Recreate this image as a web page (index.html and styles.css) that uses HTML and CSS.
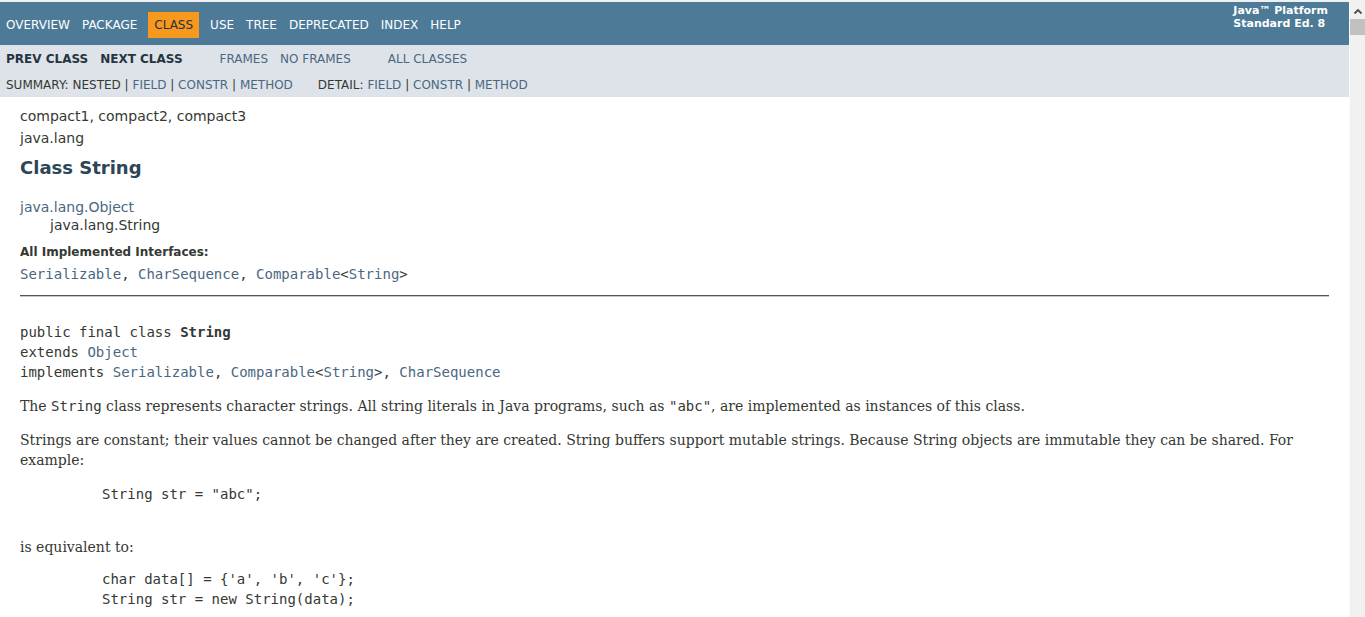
FILE: index.html
```html
<!DOCTYPE html>
<html lang="en">
<head>
<meta charset="utf-8">
<title>String (Java Platform SE 8)</title>
<link rel="stylesheet" href="styles.css">
</head>
<body>
<div class="page">
  <div class="main">
    <div class="topNav">
      <ul class="navList">
        <li><a href="#">Overview</a></li>
        <li><a href="#">Package</a></li>
        <li class="navBarCell1Rev">Class</li>
        <li><a href="#">Use</a></li>
        <li><a href="#">Tree</a></li>
        <li><a href="#">Deprecated</a></li>
        <li><a href="#">Index</a></li>
        <li><a href="#">Help</a></li>
      </ul>
      <div class="aboutLanguage"><strong>Java™ Platform<br>Standard Ed. 8</strong></div>
    </div>
    <div class="subNav">
      <div class="subRow1">
        <ul class="navList">
          <li class="strong">Prev Class</li>
          <li class="strong">Next Class</li>
        </ul>
        <ul class="navList">
          <li><a href="#">Frames</a></li>
          <li><a href="#">No Frames</a></li>
        </ul>
        <ul class="navList">
          <li><a href="#">All Classes</a></li>
        </ul>
      </div>
      <div class="subRow2">
        <ul class="subNavList">
          <li>Summary:&nbsp;Nested&nbsp;|&nbsp;<a href="#">Field</a>&nbsp;|&nbsp;<a href="#">Constr</a>&nbsp;|&nbsp;<a href="#">Method</a></li>
        </ul>
        <ul class="subNavList">
          <li>Detail:&nbsp;<a href="#">Field</a>&nbsp;|&nbsp;<a href="#">Constr</a>&nbsp;|&nbsp;<a href="#">Method</a></li>
        </ul>
      </div>
    </div>
    <div class="header">
      <div class="subTitle">compact1, compact2, compact3</div>
      <div class="subTitle">java.lang</div>
      <h2 class="title">Class String</h2>
    </div>
    <div class="contentContainer">
      <ul class="inheritance">
        <li><a href="#">java.lang.Object</a></li>
        <li>
          <ul class="inheritance inner">
            <li>java.lang.String</li>
          </ul>
        </li>
      </ul>
      <dl class="interfaces">
        <dt>All Implemented Interfaces:</dt>
        <dd><a href="#">Serializable</a>, <a href="#">CharSequence</a>, <a href="#">Comparable</a>&lt;<a href="#">String</a>&gt;</dd>
      </dl>
      <hr class="rule">
      <pre class="decl">public final class <span class="typeName">String</span>
extends <a href="#">Object</a>
implements <a href="#">Serializable</a>, <a href="#">Comparable</a>&lt;<a href="#">String</a>&gt;, <a href="#">CharSequence</a></pre>
      <div class="block p1">The <code>String</code> class represents character strings. All string literals in Java programs, such as <code>"abc"</code>, are implemented as instances of this class.</div>
      <div class="block p2">Strings are constant; their values cannot be changed after they are created. String buffers support mutable strings. Because String objects are immutable they can be shared. For example:</div>
      <pre class="example ex1">String str = "abc";</pre>
      <div class="block p3">is equivalent to:</div>
      <pre class="example ex2">char data[] = {'a', 'b', 'c'};
String str = new String(data);</pre>
    </div>
  </div>
  <div class="scrollbar">
    <div class="sbUp">
      <svg width="16" height="19" viewBox="0 0 16 19"><path d="M4.5 13.5 L8 10 L11.5 13.5" fill="none" stroke="#505050" stroke-width="1.8"/></svg>
    </div>
    <div class="sbThumb"></div>
  </div>
</div>
</body>
</html>
```
FILE: styles.css
```css
* { box-sizing: border-box; }
html, body { margin: 0; padding: 0; height: 100%; }
body {
  background: #fff;
  color: #353833;
  font-family: "DejaVu Sans", Arial, Helvetica, sans-serif;
  font-size: 14px;
  overflow: hidden;
}
a { color: #4A6782; text-decoration: none; }
ul { list-style: none; margin: 0; padding: 0; }

.page { display: flex; height: 617px; }
.main { flex: 1; min-width: 0; border-top: 2px solid #eef0f2; background: #fff; }

/* top navigation */
.topNav {
  display: flex;
  align-items: flex-start;
  height: 43px;
  padding-top: 10px;
  background: #4D7A97;
  font-size: 12px;
}
.topNav .navList { display: flex; }
.topNav li { padding: 5px 6px; line-height: 16px; text-transform: uppercase; }
.topNav a { color: #fff; }
.topNav .navBarCell1Rev { background: #F8981D; color: #253441; margin: 0 5px; }
.aboutLanguage {
  margin-left: auto;
  margin-top: -8px;
  padding: 0 21px;
  font-size: 11px;
  line-height: 13px;
  color: #fff;
}

/* sub navigation */
.subNav { background: #dee3e9; font-size: 12px; height: 52px; }
.subRow1 { display: flex; padding-top: 2px; }
.subRow1 .navList { display: flex; margin-right: 25px; }
.subRow1 li { padding: 5px 6px; line-height: 14px; text-transform: uppercase; }
.subRow1 .strong { font-weight: bold; color: #253441; }
.subRow2 { display: flex; padding: 7px 0 5px 6px; line-height: 14px; }
.subNavList { margin-right: 25px; text-transform: uppercase; white-space: nowrap; }

/* header */
.header { padding: 8px 20px 0; }
.subTitle { line-height: 22px; }
.title {
  margin: 8px 0 0;
  font-size: 18px;
  line-height: 21px;
  font-weight: bold;
  color: #2c4557;
}

/* content */
.contentContainer { padding: 20px 20px 0; }
.inheritance { line-height: 18px; }
.inheritance.inner { padding-left: 30px; }
.interfaces { margin: 11px 0 0; }
.interfaces dt { font-size: 12px; font-weight: bold; line-height: 14px; }
.interfaces dd {
  margin: 7px 0 0;
  font-family: "DejaVu Sans Mono", monospace;
  font-size: 14px;
  line-height: 17px;
}
.rule {
  margin: 12px 0 0;
  height: 0;
  border: 0;
  border-top: 1px solid #555;
  border-bottom: 1px solid #c8c8c8;
}
pre, code {
  font-family: "DejaVu Sans Mono", monospace;
  font-size: 14px;
}
pre { margin: 0; line-height: 20px; }
.decl { margin-top: 25px; }
.typeName { font-weight: bold; }
.block {
  font-family: "DejaVu Serif", Georgia, serif;
  font-size: 14px;
  line-height: 20px;
}
.p1 { margin-top: 14px; }
.p2 { margin-top: 14px; }
.example { padding-left: 82px; }
.ex1 { margin-top: 14px; }
.p3 { margin-top: 33px; }
.ex2 { margin-top: 12px; }

/* scrollbar */
.scrollbar { width: 16px; background: #f1f1f1; border-left: 1px solid #fafafa; }
.sbUp { height: 19px; }
.sbUp svg { display: block; }
.sbThumb { height: 16px; background: #c1c1c1; }
```
